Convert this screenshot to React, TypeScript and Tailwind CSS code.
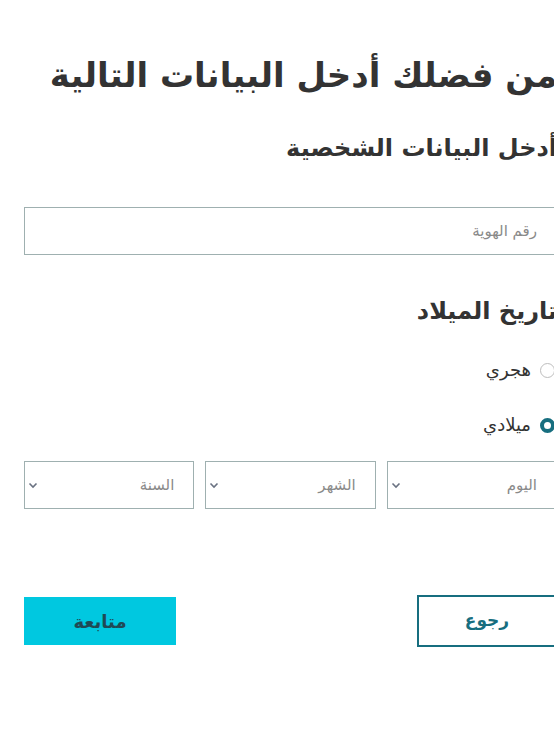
import React from "react";

const font = { fontFamily: '"DejaVu Sans", sans-serif' };

function Chevron() {
  return (
    <svg width="10" height="7" viewBox="0 0 10 7" className="text-gray-500">
      <path d="M1.5 1.5 L5 5 L8.5 1.5" fill="none" stroke="currentColor" strokeWidth="1.6" />
    </svg>
  );
}

function Select({ label }: { label: string }) {
  return (
    <div className="flex-1 h-[48px] border border-[#9fb0b0] flex items-center justify-between pr-[19px] pl-[3px]">
      <span className="text-[15px] text-[#8a8a8a]">{label}</span>
      <Chevron />
    </div>
  );
}

export default function App() {
  return (
    <div className="min-h-[746px] w-[620px] bg-white pl-6" style={font}>
      <div dir="rtl" className="w-[533px] text-[#333333]">
        <h1 className="pt-[52px] text-[34px] font-bold leading-[46px] whitespace-nowrap">
          من فضلك أدخل البيانات التالية
        </h1>
        <h2 className="mt-[32px] text-[24px] font-bold leading-[36px] whitespace-nowrap">
          أدخل البيانات الشخصية
        </h2>
        <div className="mt-[41px] h-[48px] border border-[#9fb0b0] flex items-center pr-[19px]">
          <span className="text-[15px] text-[#8a8a8a]">رقم الهوية</span>
        </div>
        <h2 className="mt-[38px] text-[24px] font-bold leading-[36px] whitespace-nowrap">
          تاريخ الميلاد
        </h2>
        <div className="mt-[27px] flex items-center gap-[9px] pr-[2px] h-[28px]">
          <span className="w-[15px] h-[15px] rounded-full border border-[#bdbdbd]" />
          <span className="text-[18px] leading-[28px]">هجري</span>
        </div>
        <div className="mt-[27px] flex items-center gap-[9px] pr-[2px] h-[28px]">
          <span className="w-[15px] h-[15px] rounded-full border-[4px] border-[#176e7f] bg-white" />
          <span className="text-[18px] leading-[28px]">ميلادي</span>
        </div>
        <div className="mt-[22px] flex gap-[11px]">
          <Select label="اليوم" />
          <Select label="الشهر" />
          <Select label="السنة" />
        </div>
        <div className="mt-[86px] flex justify-between items-center">
          <button className="w-[140px] h-[52px] border-2 border-[#176e7f] text-[#176e7f] text-[17px] font-bold bg-white">
            رجوع
          </button>
          <button className="w-[152px] h-[48px] bg-[#00c8e0] text-[#1f4a55] text-[18px] font-bold">
            متابعة
          </button>
        </div>
      </div>
    </div>
  );
}
